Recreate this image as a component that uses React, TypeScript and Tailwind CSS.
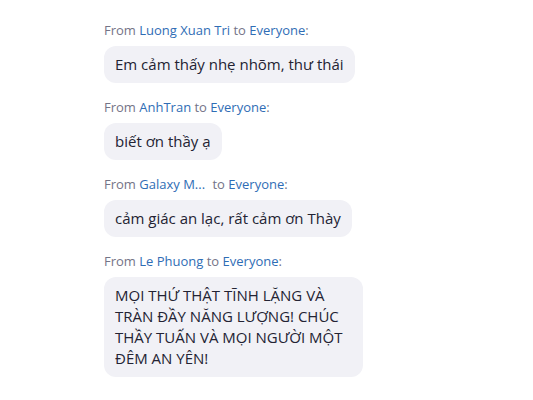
const messages = [
  { from: "Luong Xuan Tri", text: "Em cảm thấy nhẹ nhõm, thư thái" },
  { from: "AnhTran", text: "biết ơn thầy ạ" },
  { from: "Galaxy M...", text: "cảm giác an lạc, rất cảm ơn Thày", gap: true },
  {
    from: "Le Phuong",
    text: "MỌI THỨ THẬT TĨNH LẶNG VÀ TRÀN ĐẦY NĂNG LƯỢNG! CHÚC THẦY TUẤN VÀ MỌI NGƯỜI MỘT ĐÊM AN YÊN!",
  },
];

export default function App() {
  return (
    <div
      className="w-[533px] h-[400px] overflow-hidden bg-white pt-[20px] pl-[104px]"
      style={{ fontFamily: '"Open Sans", "Noto Sans", sans-serif' }}
    >
      {messages.map((m) => (
        <div key={m.from} className="mb-[14px]">
          <div className="h-[20px] leading-[20px] text-[13px] text-[#747487] mb-[6px] whitespace-nowrap">
            From <span className="text-[#2f6db5]">{m.from}</span>
            {m.gap ? <span className="inline-block w-[4px]" /> : null} to{" "}
            <span className="text-[#2f6db5]">Everyone</span>:
          </div>
          <div className="inline-block max-w-[259px] bg-[#f1f1f6] rounded-[12px] px-[11px] py-[8px] text-[15px] leading-[21px] text-[#232333]">
            {m.text}
          </div>
        </div>
      ))}
    </div>
  );
}
